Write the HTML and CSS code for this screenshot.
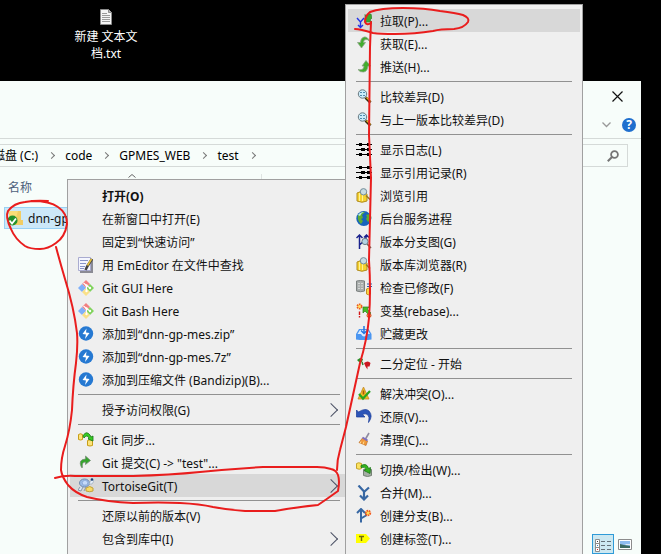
FILE: index.html
```html
<!DOCTYPE html>
<html lang="zh-CN">
<head>
<meta charset="utf-8">
<title>test</title>
<link rel="stylesheet" href="styles.css">
</head>
<body>
<svg class="sprite" aria-hidden="true">
  <symbol id="i-edit" viewBox="0 0 16 16"><path d="M2 2h13v14H2z" fill="#8a8a94"/><path d="M.5.500h12v13H.500z" fill="#f4f6ff" stroke="#a9abd0"/><path d="M2 3.500h8M2 6.500h6M2 9.500h5M2 11.500h4" stroke="#8795c8"/><path d="M14 2L9.500 9l-2 4" stroke="#444" stroke-width="2.600" fill="none"/><path d="M13.500 2L9.500 8.500" stroke="#e8c23c" stroke-width="1.600"/></symbol>
  <symbol id="i-git" viewBox="0 0 16 16"><path d="M8 0l4 4-4 4-4-4z" fill="#f28080"/><path d="M4 4l4 4-4 4-4-4z" fill="#7fb0fa"/><path d="M12 4l4 4-4 4-4-4z" fill="#80d35c"/><path d="M8 8l4 4-4 4-4-4z" fill="#fae088"/><path d="M5.500 3l3 2.500V11M8.500 5.500L12 8" fill="none" stroke="#fff" stroke-width="1.100"/><circle cx="8.500" cy="5.500" r="1.200" fill="#fff"/><circle cx="8.500" cy="11" r="1.200" fill="#fff"/><circle cx="12" cy="8" r="1.200" fill="#fff"/></symbol>
  <symbol id="i-zip" viewBox="0 0 16 16"><circle cx="8" cy="7.500" r="7.200" fill="#2679d2"/><path d="M8.500 2.500L4.500 8l3.500.5-1 4.500 4.500-6L8 6.500z" fill="#fff"/></symbol>
  <symbol id="i-sync" viewBox="0 0 16 16"><path d="M.5 2.500q2-1.500 4 0v5q-2 1-4 0zM9.500 8.500q2.500-1.500 5 0v5q-2.500 1-5 0z" fill="#fbe37a" stroke="#c79d18"/><path d="M5 4q3-6 7-1l1 2 2-1v5l-5-2 1-1Q9 2 6 6z" fill="#38cc24" stroke="#187515" stroke-width=".8"/></symbol>
  <symbol id="i-commit" viewBox="0 0 16 16"><path d="M3.500 12.500Q-.500 4.500 7.500 4V1l5 4.500-5 4V7Q3.500 7 4.500 12.500z" fill="#35a52c" stroke="#7c907c" stroke-width=".8"/></symbol>
  <symbol id="i-tortoise" viewBox="0 0 16 16"><path d="M2 9l-2 3 3 1 2-4M8 9l-2 4" fill="#d9e5f4" stroke="#879aaa"/><ellipse cx="6.500" cy="5" rx="5" ry="4" fill="#9cbce8" stroke="#718bae"/><path d="M4 4l3-2 3 2-1 3H5z" fill="#c5dafa" stroke="#7897ca" stroke-width=".6"/><path d="M11 6l2-4q2-1 3 1l-2 3z" fill="#e4edf8" stroke="#9babb8" stroke-width=".7"/><circle cx="14" cy="1.500" r="1.300" fill="#173e78"/><path d="M8 10q4-3 7 0v3q-3 1.500-7 0z" fill="#f7da65" stroke="#c2a23a"/></symbol>
  <symbol id="i-pull" viewBox="0 0 16 16"><path d="M1 5l3.500 4L8 5M4.500 9v5.500M2 12l2.500 2.500L7 12" fill="none" stroke="#2233e8" stroke-width="1.400"/><path d="M15 1h-3L10.500 3 9 1.500V9h7l-2-2 2-2z" fill="#38a82a" stroke="#3c7c38" stroke-width=".7"/></symbol>
  <symbol id="i-fetch" viewBox="0 0 16 16"><path d="M13.500 5.500Q12 .500 8 1 4.500 2 4.500 6.500H1.500L5.500 12l4-5.500H7.500q0-3 2.500-3 2-.5 3.500 2z" fill="#43ad2e" stroke="#8ca287" stroke-width=".8"/></symbol>
  <symbol id="i-push" viewBox="0 0 16 16"><path d="M2 10.500q2 3 5.500 2.500 4-.5 4.500-6h2.500L10 1.500 6 7h2q0 3-2 3.500-2 .5-4 0z" fill="#43ad2e" stroke="#8ca287" stroke-width=".8"/></symbol>
  <symbol id="i-diff" viewBox="0 0 16 16"><path d="M9.500 8.500l5 5" stroke="#35280a" stroke-width="2.800"/><path d="M10.500 8.500l4 4" stroke="#e8b52b" stroke-width="1.300"/><circle cx="6.500" cy="5" r="4.200" fill="#caecfa" stroke="#68787f"/><path d="M4 3.500h5M4 6.500h5" stroke="#508cae" stroke-dasharray="2 1"/></symbol>
  <symbol id="i-log" viewBox="0 0 16 16"><path d="M0 2.500h16M0 7.500h16M0 12.500h16" stroke="#000"/><path d="M3 2.500h3M11 2.500h3M5 7.500h4M11 7.500h3M3 12.500h3M11 12.500h3" stroke="#000" stroke-width="3"/></symbol>
  <symbol id="i-browse" viewBox="0 0 16 16"><path d="M1 5q4-2.500 8-1l2 2v7q-5 2.500-10 0z" fill="#f5d22f" stroke="#b18c22"/><path d="M3.500 5v8M6.500 5v8" stroke="#fff194"/><path d="M10 7.500l4 4" stroke="#9a7c25" stroke-width="1.600"/><circle cx="7.500" cy="3.800" r="3.200" fill="#c8dce3" stroke="#738d99"/></symbol>
  <symbol id="i-globe" viewBox="0 0 16 16"><circle cx="7.800" cy="7.500" r="7.500" fill="#1763bb"/><path d="M2 4q4-4 7-3L6 4l1 3-2 1 2 2-2 3Q1 10 2 4zM10 4l4-1q2 3 1 5l-3 3-2-3 1-2z" fill="#5eac32"/><path d="M2 4q2-3 6-3-3 1-4 4z" fill="#b5e8ee"/></symbol>
  <symbol id="i-graph" viewBox="0 0 16 16"><path d="M3.500 15V1M.500 4l3-3 3 3M3.500 11L10 5V2M8 3.500L10.500 1 13 3.500" fill="none" stroke="#1b238d" stroke-width="1.500"/><path d="M11 10l4 4" stroke="#6d695b" stroke-width="1.600"/><circle cx="9" cy="7.500" r="3.100" fill="#b3d2e3" stroke="#6b7b85"/></symbol>
  <symbol id="i-check" viewBox="0 0 16 16"><path d="M.5 1q4-1 8 0v10q-4 1.500-8 0z" fill="#a9adac" stroke="#7c8180"/><path d="M2 3.500h5M2 6h5M2 8.500h5" stroke="#d6d8d7" stroke-dasharray="2 1"/><path d="M11 4h5M11 6.500h5" stroke="#2e5cad" stroke-width="1.200"/><path d="M10.500 9q2-1.500 4 0v5q-2 1.500-4 0z" fill="#fbd54a" stroke="#c3911f"/></symbol>
  <symbol id="i-rebase" viewBox="0 0 16 16"><circle cx="3.500" cy="3.500" r="2.200" fill="#ffe464" stroke="#ee5b22" stroke-width="1.600" stroke-dasharray="1.500 .700"/><path d="M3.500 8.500v3.500M3.500 13v1.500" stroke="#d31616" stroke-width="1.400"/><path d="M7 4h6l-2 2 4 4-2 2-4-4-2 2z" fill="#48bd26" stroke="#2c7c20" stroke-width=".7"/><circle cx="13" cy="12.500" r="2" fill="#f3a348" stroke="#d64a23"/></symbol>
  <symbol id="i-stash" viewBox="0 0 16 16"><path d="M0 8l3-5h9.500l3 5v5.500q-7.500 1-15.500 0z" fill="#4b96f1"/><path d="M1.500 8L4 4h7.500L14 8h-3q-3 5-6 0z" fill="#dcedff"/><path d="M8 0v7M5 4.500l3 3 3-3" fill="none" stroke="#2578df" stroke-width="1.500"/></symbol>
  <symbol id="i-bisect" viewBox="0 0 16 16"><path d="M1 4l3-2 3 1-1 3H3z" fill="#278f27"/><path d="M6 6l1 3" stroke="#347b31" stroke-width="1.500"/><path d="M8 7q4-3 6.500 0l-1 3.500h-2v3l-2-3z" fill="#cb1620"/></symbol>
  <symbol id="i-resolve" viewBox="0 0 16 16"><path d="M7.500 1l5.500 12H2z" fill="#f4bd23" stroke="#c1882a" stroke-width=".8"/><path d="M7.500 4.500v4" stroke="#a35a12" stroke-width="1.600"/><path d="M3 8l4 4.500L14 5" fill="none" stroke="#29a51f" stroke-width="2.200"/></symbol>
  <symbol id="i-revert" viewBox="0 0 16 16"><path d="M.500 1l2 2q7-4.500 10.500-1 4.500 5-.5 11.500 1.500-6-1-8-2.500-1.500-5 0L9 8H.500z" fill="#2c55b8" stroke="#183b9a" stroke-width=".7"/></symbol>
  <symbol id="i-clean" viewBox="0 0 16 16"><path d="M13 1L9.500 7" stroke="#8e8aa0" stroke-width="1.600"/><path d="M6.500 6l5 3-1.500 4.500-7-3z" fill="#f0993a" stroke="#be6e26" stroke-width=".7"/><path d="M6.500 5.500l5 3" stroke="#7c6fc2" stroke-width="2"/><path d="M5 9.500l-1 2M8 9.500l-1 3" stroke="#ffdf94"/></symbol>
  <symbol id="i-switch" viewBox="0 0 16 16"><path d="M.5 1.500q2-1.500 5 0v5q-2 1.500-5 0z" fill="#fbe261" stroke="#c3a329"/><path d="M7.500 7.500h8v6q-4 2-8 0z" fill="#a5ada5" stroke="#758275"/><path d="M5 3.500q6-3 7.500 3l2-1-.5 6-6-3 2-1Q8.500 4 5 5.500z" fill="#35b31e" stroke="#187515" stroke-width=".8"/></symbol>
  <symbol id="i-merge" viewBox="0 0 16 16"><path d="M2.500.500L8 6.500v8M13 2.500L8 7M4 10.500l4 4 4-4" fill="none" stroke="#3767a3" stroke-width="2.200"/></symbol>
  <symbol id="i-branch" viewBox="0 0 16 16"><path d="M5 14.500V1M1 5l4-4 4 4M5 10.500l5-3V5" fill="none" stroke="#3767a3" stroke-width="2"/><circle cx="12" cy="5" r="2.300" fill="#ffdb58" stroke="#f25a21" stroke-width="1.800" stroke-dasharray="1.500 .600"/></symbol>
  <symbol id="i-tag" viewBox="0 0 16 16"><path d="M0 3h10l4 4.500-4 4.500H0z" fill="#ffff00"/><path d="M3 5.500h5M5.500 5.500v4.500" stroke="#6f6a10" stroke-width="1.400"/></symbol>
  <symbol id="i-export" viewBox="0 0 16 16"><path d="M1 0h6l1 2v13H1z" fill="#8f9190"/></symbol>
</svg>

<main class="desktop">
  <section class="shortcuts">
    <a class="shortcut" href="#">
      <svg class="doc" viewBox="0 0 12 16"><path d="M.5.500h8l3 3v12H.500z" fill="#f4f4f4" stroke="#8b8b8b"/><path d="M8.500.500v3h3" fill="#bbb" stroke="#8b8b8b"/><path d="M2 4.500h5M2 6.500h8M2 8.500h8M2 10.500h8M2 12.500h8" stroke="#999"/></svg>
      <span>新建 文本文<br>档.txt</span>
    </a>
  </section>

  <section class="explorer">
    <div class="titlebar">
      <button class="plain" aria-label="关闭"><svg width="11" height="11" viewBox="0 0 11 11"><path d="M.500.500l10 10M10.500.500l-10 10" stroke="#111" stroke-width="1.200"/></svg></button>
    </div>
    <div class="ribbon">
      <button class="plain" aria-label="展开"><svg width="9" height="6" viewBox="0 0 9 6"><path d="M.5.500l4 4 4-4" fill="none" stroke="#999" stroke-width="1.300"/></svg></button>
      <button class="help" aria-label="帮助">?</button>
    </div>
    <div class="location">
      <nav class="crumbs">
        <a href="#">磁盘 (C:)</a><i></i><a href="#">code</a><i></i><a href="#">GPMES_WEB</a><i></i><a href="#">test</a><i></i>
      </nav>
      <button class="search" aria-label="搜索"><svg width="12" height="12" viewBox="0 0 12 12"><circle cx="7.500" cy="4.500" r="3.400" fill="none" stroke="#757575" stroke-width="1.800"/><path d="M5 7L.800 11.200" stroke="#757575" stroke-width="2"/></svg></button>
    </div>
    <div class="columns">
      <button class="plain column">名称<svg width="8" height="4" viewBox="0 0 8 4"><path d="M.5 3.500L4 .500l3.500 3" fill="none" stroke="#666"/></svg></button>
    </div>
    <ul class="files">
      <li><svg width="16" height="16" viewBox="0 0 16 16"><path d="M1 1h11v14H1z" fill="#fbdc78"/><path d="M10 1h3v9h2v5H6z" fill="#f2cd63"/><circle cx="4.500" cy="10.500" r="5" fill="#24902c"/><path d="M1.500 10.500l2.500 3 4-5" fill="none" stroke="#fff" stroke-width="1.800"/></svg>dnn-gp-mes</li>
    </ul>
    <div class="views">
      <button class="view on" aria-label="详细信息"><svg width="16" height="13" viewBox="0 0 16 13"><path d="M.5.500h4v12h-4zM.500 4.500h4M.500 8.500h4" fill="#fff" stroke="#8c8c8c"/><path d="M6 2.500h4M12 2.500h4M6 6.500h4M12 6.500h4M6 10.500h4M12 10.500h4" stroke="#647078"/><path d="M2 2h1v1H2z" fill="#444"/><path d="M2 6h1v1H2z" fill="#2f83c4"/><path d="M2 10h1v1H2z" fill="#d22"/></svg></button>
      <button class="view" aria-label="大图标"><svg width="14" height="11" viewBox="0 0 14 11"><path d="M.5.500h13v10H.500z" fill="#fff" stroke="#8c8c8c"/><path d="M2 2h10v7H2z" fill="#8fbdf0"/><path d="M2 5l4 1 6 1v2H2z" fill="#3d6b62"/><path d="M7 5h5v1H8z" fill="#e1edf5"/></svg></button>
    </div>
  </section>

  <div class="menu menu-main" role="menu">
    <button class="item strong"><svg></svg>打开(O)</button>
    <button class="item"><svg></svg>在新窗口中打开(E)</button>
    <button class="item"><svg></svg>固定到“快速访问”</button>
    <button class="item"><svg><use href="#i-edit"/></svg>用 EmEditor 在文件中查找</button>
    <button class="item"><svg><use href="#i-git"/></svg>Git GUI Here</button>
    <button class="item"><svg><use href="#i-git"/></svg>Git Bash Here</button>
    <button class="item"><svg><use href="#i-zip"/></svg>添加到“dnn-gp-mes.zip”</button>
    <button class="item"><svg><use href="#i-zip"/></svg>添加到“dnn-gp-mes.7z”</button>
    <button class="item"><svg><use href="#i-zip"/></svg>添加到压缩文件 (Bandizip)(B)...</button>
    <hr>
    <button class="item more"><svg></svg>授予访问权限(G)</button>
    <hr>
    <button class="item"><svg><use href="#i-sync"/></svg>Git 同步...</button>
    <button class="item"><svg><use href="#i-commit"/></svg>Git 提交(C) -&gt; "test"...</button>
    <button class="item more active"><svg><use href="#i-tortoise"/></svg>TortoiseGit(T)</button>
    <hr>
    <button class="item"><svg></svg>还原以前的版本(V)</button>
    <button class="item more"><svg></svg>包含到库中(I)</button>
  </div>

  <div class="menu menu-sub" role="menu">
    <button class="item active"><svg><use href="#i-pull"/></svg>拉取(P)...</button>
    <button class="item"><svg><use href="#i-fetch"/></svg>获取(E)...</button>
    <button class="item"><svg><use href="#i-push"/></svg>推送(H)...</button>
    <hr>
    <button class="item"><svg><use href="#i-diff"/></svg>比较差异(D)</button>
    <button class="item"><svg><use href="#i-diff"/></svg>与上一版本比较差异(D)</button>
    <hr>
    <button class="item"><svg><use href="#i-log"/></svg>显示日志(L)</button>
    <button class="item"><svg><use href="#i-log"/></svg>显示引用记录(R)</button>
    <button class="item"><svg><use href="#i-browse"/></svg>浏览引用</button>
    <button class="item"><svg><use href="#i-globe"/></svg>后台服务进程</button>
    <button class="item"><svg><use href="#i-graph"/></svg>版本分支图(G)</button>
    <button class="item"><svg><use href="#i-browse"/></svg>版本库浏览器(R)</button>
    <button class="item"><svg><use href="#i-check"/></svg>检查已修改(F)</button>
    <button class="item"><svg><use href="#i-rebase"/></svg>变基(rebase)...</button>
    <button class="item"><svg><use href="#i-stash"/></svg>贮藏更改</button>
    <hr>
    <button class="item"><svg><use href="#i-bisect"/></svg>二分定位 - 开始</button>
    <hr>
    <button class="item"><svg><use href="#i-resolve"/></svg>解决冲突(O)...</button>
    <button class="item"><svg><use href="#i-revert"/></svg>还原(V)...</button>
    <button class="item"><svg><use href="#i-clean"/></svg>清理(C)...</button>
    <hr>
    <button class="item"><svg><use href="#i-switch"/></svg>切换/检出(W)...</button>
    <button class="item"><svg><use href="#i-merge"/></svg>合并(M)...</button>
    <button class="item"><svg><use href="#i-branch"/></svg>创建分支(B)...</button>
    <button class="item"><svg><use href="#i-tag"/></svg>创建标签(T)...</button>
    <button class="item"><svg><use href="#i-export"/></svg></button>
  </div>

  <svg class="ink" width="661" height="554" viewBox="0 0 661 554" aria-hidden="true">
    <path d="M32 201Q50 201 58 207Q67 213 67 224Q65 237 56 243Q48 249 40 249Q30 249 25 246Q15 239 11 229Q5 217 8 211Q14 203 25 202Q36 200 48 201"/>
    <path d="M56 247Q60 262 65 279Q74 308 77 333Q78 345 76 363Q73 385 72 410Q70 430 65 446Q61 458 61 470Q62 477 68 485Q75 493 87 497Q107 502 133 503Q160 502 180 503Q200 504 213 507Q228 510 245 511H275Q298 507 318 505Q327 499 338 491Q340 481 338 475Q336 470 331 469Q325 467 317 467H263Q230 469 200 472Q170 475 133 476H75Q65 475 55 478"/>
    <path d="M337 470Q337 460 340 450L346 427L360 363Q367 340 369 318Q371 290 369 260L371 178L369 135L370 47L371 22"/>
    <path d="M371 23Q367 26 365 22Q365 16 370 12Q380 8 403 8Q425 8 440 11Q456 13 463 15Q470 18 468 22Q464 28 454 29Q440 29 433 31Q415 34 395 34Q380 34 373 33Q360 29 355 29"/>
  </svg>
</main>
</body>
</html>
```
FILE: styles.css
```css
* { box-sizing: border-box; }

body {
  margin: 0;
  overflow: hidden;
  background: #000;
  color: #111;
  font: 12px/17px "Noto Sans", "Noto Sans CJK SC", sans-serif;
}

button {
  font: inherit;
  color: inherit;
  border: 0;
  margin: 0;
  padding: 0;
  background: none;
}

a { color: inherit; text-decoration: none; }
svg { display: block; flex: none; }
.sprite { position: absolute; width: 0; height: 0; }

.desktop {
  position: relative;
  display: flex;
  flex-direction: column;
  height: 100vh;
  overflow: hidden;
}

.shortcuts { flex: none; height: 81px; padding: 9px 68px 0; display: flex; }

.shortcut {
  display: flex;
  flex-direction: column;
  align-items: center;
  gap: 3px;
  width: 76px;
  color: #fff;
  text-align: center;
}

.doc { width: 12px; height: 16px; }

.explorer {
  flex: 1;
  display: flex;
  flex-direction: column;
  margin-right: 20px;
  background: #f7fdfa;
}

.plain { display: flex; align-items: center; }

.titlebar {
  display: flex;
  justify-content: flex-end;
  height: 30px;
  padding-right: 18px;
}

.ribbon {
  display: flex;
  justify-content: flex-end;
  align-items: center;
  gap: 11px;
  height: 28px;
  padding-right: 5px;
  border-bottom: 1px solid #d5dad8;
}

.help {
  width: 14px;
  height: 14px;
  border-radius: 50%;
  background: #1f6fce;
  color: #fff;
  font-weight: bold;
  line-height: 14px;
  text-align: center;
}

.location { display: flex; gap: 8px; margin-top: 5px; padding-right: 13px; }

.crumbs {
  flex: 1;
  display: flex;
  align-items: center;
  gap: 11px;
  height: 23px;
  margin-left: -7px;
  border: 1px solid #d5dad8;
  border-left: 0;
  color: #000;
}

.crumbs i {
  width: 5px;
  height: 5px;
  border: solid #777;
  border-width: 1px 1px 0 0;
  transform: rotate(45deg);
}

.search {
  display: flex;
  align-items: center;
  justify-content: flex-end;
  width: 180px;
  padding-right: 8px;
  border: 1px solid #d5dad8;
}

.columns { display: flex; padding-top: 7px; }

.column {
  gap: 96px;
  width: 262px;
  height: 27px;
  padding-left: 8px;
  border-right: 1px solid #dfe4e2;
  color: #4c607a;
}

.column svg { align-self: flex-start; }

.files { flex: 1; list-style: none; margin: 0; padding: 6px 4px; }

.files li {
  display: flex;
  align-items: center;
  gap: 4px;
  width: 260px;
  height: 22px;
  padding-left: 3px;
  border: 1px solid #99d1f5;
  background: #cce8f8;
}

.views { display: flex; justify-content: flex-end; gap: 1px; padding-right: 6px; }

.view { display: flex; justify-content: center; width: 20px; height: 20px; padding-top: 5px; }
.view.on { width: 22px; padding-top: 4px; border: 1px solid #2f9bd8; background: #cce8f1; }

.menu {
  position: absolute;
  padding: 4px 2px;
  border: 1px solid #a0a0a0;
  background: #efefef;
}

.menu-main { left: 67px; top: 179px; width: 281px; height: 400px; }
.menu-sub { left: 345px; top: 4px; width: 238px; }

.item {
  display: flex;
  align-items: center;
  gap: 8px;
  width: 100%;
  height: 23px;
  padding: 1px 8px 0;
  text-align: left;
  white-space: nowrap;
}

.item svg { width: 16px; height: 16px; }
.strong { font-weight: bold; }
.active { background: #d8d8d8; }

.more::after {
  content: "";
  width: 9px;
  height: 9px;
  margin-left: auto;
  margin-right: 1px;
  border: solid #4a5064;
  border-width: 1px 1px 0 0;
  transform: rotate(45deg);
}

.menu hr { height: 1px; margin: 3px 8px; border: 0; background: #919191; }
.menu-main hr { margin-right: 5px; }

.ink { position: absolute; left: 0; top: 0; pointer-events: none; }
.ink path {
  fill: none;
  stroke: #e91d1d;
  stroke-width: 2;
  stroke-linecap: round;
  stroke-linejoin: round;
}
```
